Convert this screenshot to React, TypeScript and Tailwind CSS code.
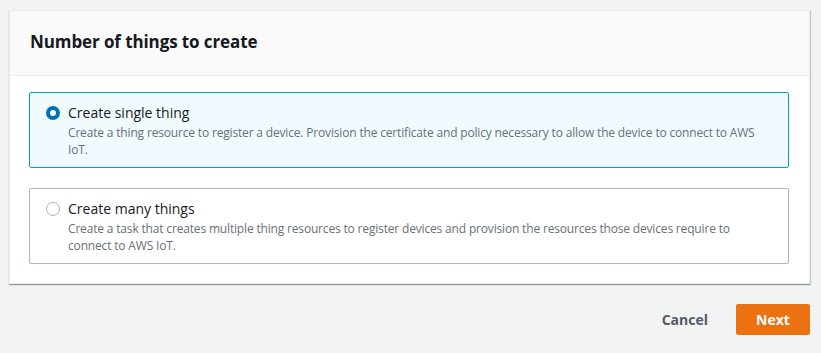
import { useState } from "react";

const options = [
  {
    id: "single",
    label: "Create single thing",
    desc: "Create a thing resource to register a device. Provision the certificate and policy necessary to allow the device to connect to AWS IoT.",
  },
  {
    id: "many",
    label: "Create many things",
    desc: "Create a task that creates multiple thing resources to register devices and provision the resources those devices require to connect to AWS IoT.",
  },
];

const App = () => {
  const [selected, setSelected] = useState("single");

  return (
    <div className="min-h-[353px] bg-[#f2f3f3] pt-[10px] pl-[9px] pr-[11px] font-['Open_Sans',sans-serif] text-[#16191f]">
      <div className="bg-white border border-[#eaeded] shadow-[0_1px_1px_0_rgba(0,28,36,0.3),1px_1px_1px_0_rgba(0,28,36,0.15)]">
        <div className="h-[65px] bg-[#fafafa] border-b border-[#eaeded] flex items-center pl-[20px] pb-[2px]">
          <h2 className="text-[17px] font-bold leading-[22px] tracking-[-0.1px]">Number of things to create</h2>
        </div>
        <div className="pl-[19px] pr-5 pt-4 pb-[19px] flex flex-col gap-5">
          {options.map((o) => {
            const on = selected === o.id;
            return (
              <label
                key={o.id}
                onClick={() => setSelected(o.id)}
                className={`flex gap-2 pl-4 pr-4 pt-[9px] h-[76px] rounded-[2px] border cursor-pointer ${
                  on ? "border-[#00a1c9] bg-[#f1faff]" : "border-[#aab7b8] bg-white"
                }`}
              >
                <span
                  className={`mt-[4px] w-[14px] h-[14px] shrink-0 rounded-full ${
                    on ? "border-[4px] border-[#0073bb] bg-white" : "border border-[#aab7b8] bg-white"
                  }`}
                />
                <span className="flex flex-col">
                  <span className="text-[14px] leading-[22px]">{o.label}</span>
                  <span className="text-[12px] leading-[17px] tracking-[-0.17px] text-[#687078]">{o.desc}</span>
                </span>
              </label>
            );
          })}
        </div>
      </div>
      <div className="flex justify-end items-center gap-[28px] mt-[20px]">
        <button className="text-[14px] font-bold text-[#545b64]">Cancel</button>
        <button className="w-[74px] h-[31px] rounded-[2px] bg-[#ec7211] text-white text-[14px] font-bold">Next</button>
      </div>
    </div>
  );
};

export default App;
